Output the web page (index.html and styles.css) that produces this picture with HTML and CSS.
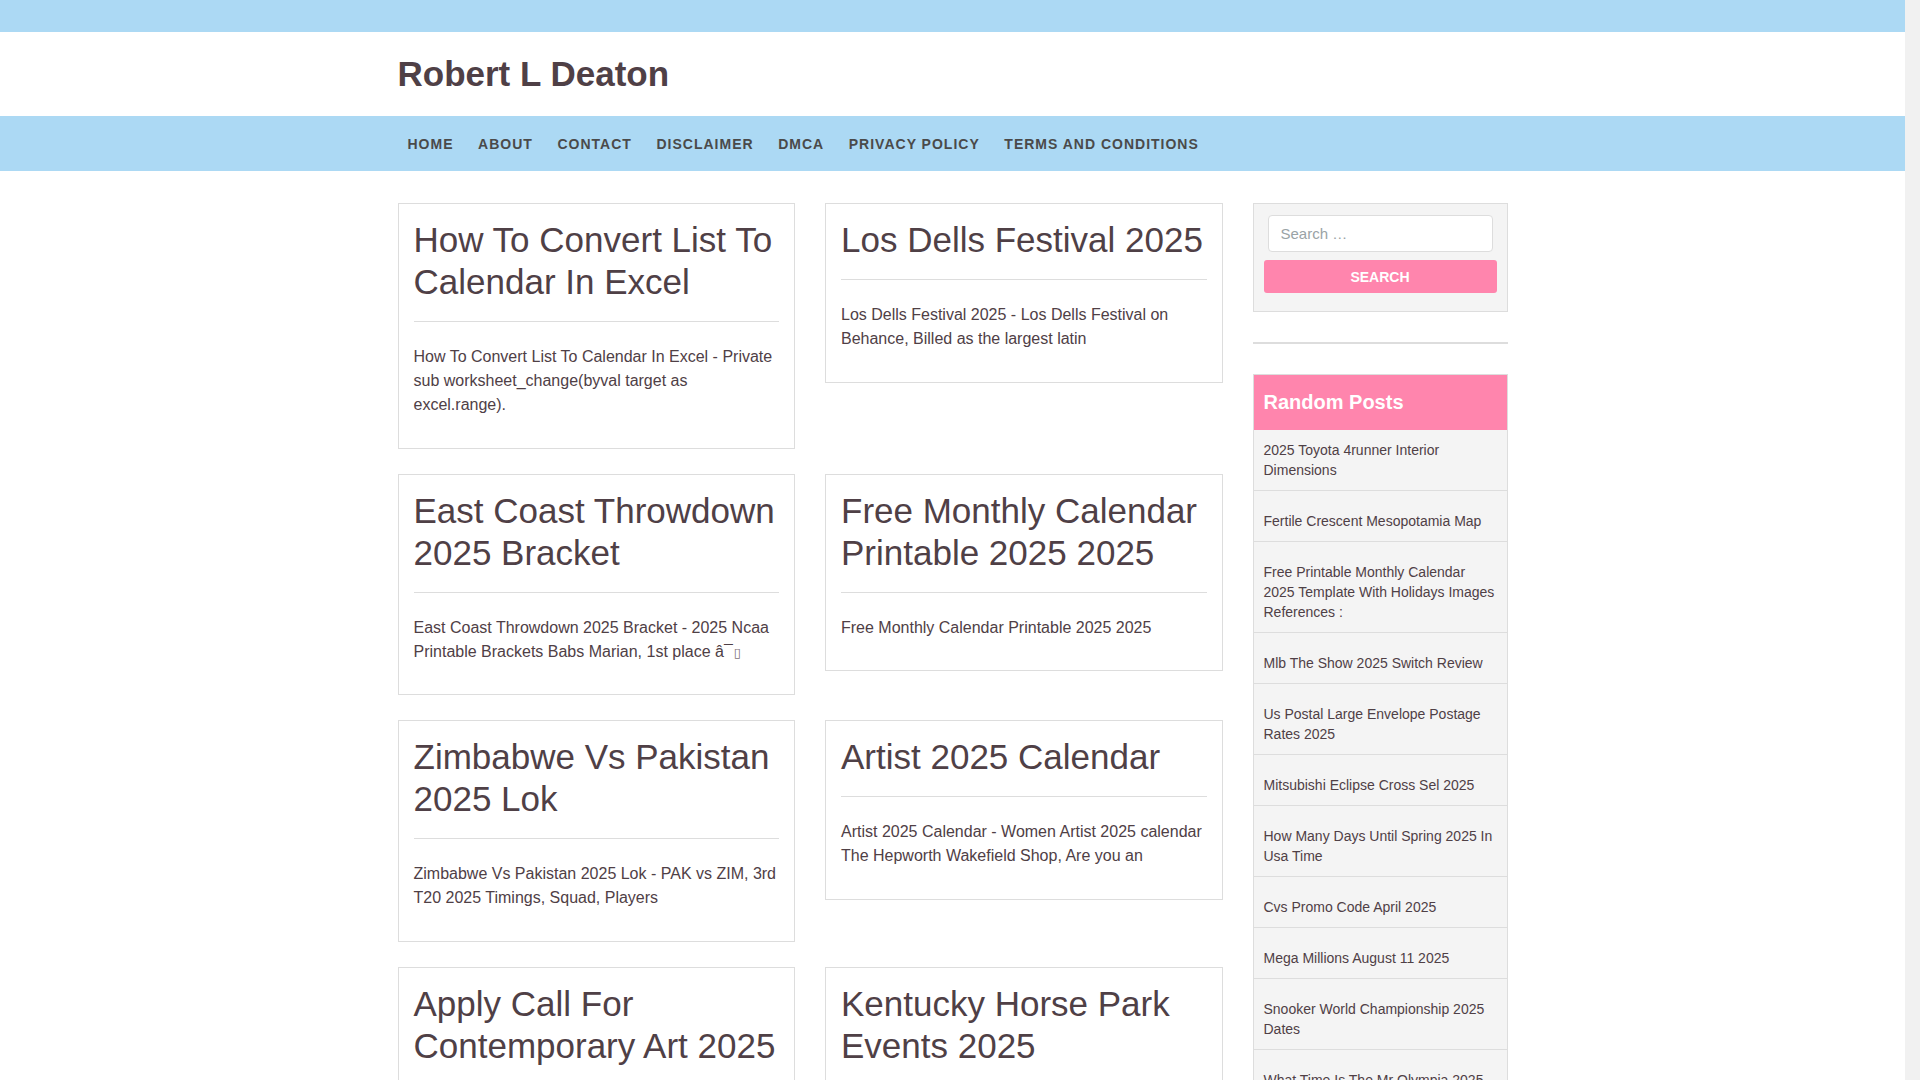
FILE: index.html
```html
<!DOCTYPE html>
<html>

<head>
  <title>Robert L Deaton</title>
  <meta charset="UTF-8">
  <meta name="viewport" content="width=device-width,initial-scale=1.0">
  <link rel="stylesheet" href="styles.css">
</head>

<body>
  <div class="top_bar"></div>

  <div class="site_header">
    <div class="container">
      <h1 class="site_title"><a href="">Robert L Deaton</a></h1>
    </div>
  </div>

  <div class="site_nav">
    <div class="container nav_list">
      <a href="">Home</a>
      <a href="">About</a>
      <a href="">Contact</a>
      <a href="">Disclaimer</a>
      <a href="">DMCA</a>
      <a href="">Privacy Policy</a>
      <a href="">Terms and Conditions</a>
    </div>
  </div>

  <div class="container page_main">

    <div class="posts">

      <div class="post">
        <h2><a href="">How To Convert List To Calendar In Excel</a></h2>
        <p>How To Convert List To Calendar In Excel - Private sub worksheet_change(byval target as excel.range).</p>
      </div>

      <div class="post">
        <h2><a href="">Los Dells Festival 2025</a></h2>
        <p>Los Dells Festival 2025 - Los Dells Festival on Behance, Billed as the largest latin</p>
      </div>

      <div class="post">
        <h2><a href="">East Coast Throwdown 2025 Bracket</a></h2>
        <p>East Coast Throwdown 2025 Bracket - 2025 Ncaa Printable Brackets Babs Marian, 1st place â¯<span class="tofu">▯</span></p>
      </div>

      <div class="post">
        <h2><a href="">Free Monthly Calendar Printable 2025 2025</a></h2>
        <p>Free Monthly Calendar Printable 2025 2025</p>
      </div>

      <div class="post">
        <h2><a href="">Zimbabwe Vs Pakistan 2025 Lok</a></h2>
        <p>Zimbabwe Vs Pakistan 2025 Lok - PAK vs ZIM, 3rd T20 2025 Timings, Squad, Players</p>
      </div>

      <div class="post">
        <h2><a href="">Artist 2025 Calendar</a></h2>
        <p>Artist 2025 Calendar - Women Artist 2025 calendar The Hepworth Wakefield Shop, Are you an</p>
      </div>

      <div class="post">
        <h2><a href="">Apply Call For Contemporary Art 2025</a></h2>
        <p>Apply Call For Contemporary Art 2025 - Open call for artists, submissions are now open</p>
      </div>

      <div class="post">
        <h2><a href="">Kentucky Horse Park Events 2025</a></h2>
        <p>Kentucky Horse Park Events 2025 - Calendar of events at the Kentucky Horse Park</p>
      </div>

    </div>

    <div class="sidebar">

      <div class="widget widget_search">
        <form>
          <input type="search" placeholder="Search …">
          <button type="button">Search</button>
        </form>
      </div>

      <div class="widget_line"></div>

      <div class="widget widget_posts">
        <h3>Random Posts</h3>
        <ul>
          <li><a href="">2025 Toyota 4runner Interior Dimensions</a></li>
          <li><a href="">Fertile Crescent Mesopotamia Map</a></li>
          <li><a href="">Free Printable Monthly Calendar 2025 Template With Holidays Images References :</a></li>
          <li><a href="">Mlb The Show 2025 Switch Review</a></li>
          <li><a href="">Us Postal Large Envelope Postage Rates 2025</a></li>
          <li><a href="">Mitsubishi Eclipse Cross Sel 2025</a></li>
          <li><a href="">How Many Days Until Spring 2025 In Usa Time</a></li>
          <li><a href="">Cvs Promo Code April 2025</a></li>
          <li><a href="">Mega Millions August 11 2025</a></li>
          <li><a href="">Snooker World Championship 2025 Dates</a></li>
          <li><a href="">What Time Is The Mr Olympia 2025 Start</a></li>
          <li><a href="">Best Time To Visit Japan 2025</a></li>
        </ul>
      </div>

    </div>

  </div>

  <div class="site_footer">
    <div class="container">Copyright © 2025 Robert L Deaton</div>
  </div>

  <div class="scroll_track"></div>
</body>

</html>
```

FILE: styles.css
```css
html,
body {
  margin: 0;
  padding: 0;
  background-color: white;
  font-family: "Liberation Sans", Arial, sans-serif;
  color: #4f4046;
}

body {
  margin-right: 15px;
}

a {
  color: inherit;
  text-decoration: none;
}

.container {
  width: 1110px;
  margin: 0 auto;
}

.top_bar {
  height: 32px;
  background-color: #acd9f4;
}

.site_header .container {
  height: 84px;
  display: flex;
  align-items: center;
}

.site_title {
  margin: 0;
  font-size: 35px;
  font-weight: bold;
  line-height: 1.2;
}

.site_nav {
  background-color: #acd9f4;
}

.nav_list {
  height: 55px;
  display: flex;
  align-items: center;
  gap: 4.6px;
}

.nav_list a {
  padding: 0 10px;
  font-size: 14px;
  font-weight: bold;
  letter-spacing: 1px;
  text-transform: uppercase;
  color: #4a4a4a;
}

.page_main {
  display: flex;
  gap: 30px;
  align-items: flex-start;
  padding-top: 32px;
}

.posts {
  width: 825px;
  display: grid;
  grid-template-columns: repeat(2, 1fr);
  column-gap: 30px;
  row-gap: 25px;
  align-items: start;
}

.post {
  border: 1px solid #dddddd;
  padding: 15px;
}

.post h2 {
  margin: 0;
  padding-bottom: 18px;
  border-bottom: 1px solid #dddddd;
  font-size: 35px;
  font-weight: normal;
  line-height: 42px;
}

.post p {
  margin: 23px 0 15.5px;
  font-size: 16px;
  line-height: 24px;
}

.tofu {
  display: inline-block;
  margin-left: 1px;
  line-height: 0;
  font-family: "DejaVu Sans", sans-serif;
  font-size: 13px;
  color: #7d6f74;
}

.sidebar {
  width: 255px;
}

.widget {
  border: 1px solid #dddddd;
  background-color: #f4f4f4;
}

.widget_search {
  padding: 11px 10px 18px;
}

.widget_search input {
  display: block;
  box-sizing: border-box;
  width: calc(100% - 8px);
  height: 37px;
  margin: 0 4px;
  padding: 0 12px;
  border: 1px solid #dddddd;
  border-radius: 4px;
  background-color: white;
  font-family: inherit;
  font-size: 15px;
  color: #4f4046;
}

.widget_search input::placeholder {
  color: #9aa3a6;
}

.widget_search button {
  display: block;
  width: 100%;
  height: 33px;
  margin-top: 8px;
  border: none;
  border-radius: 3px;
  background-color: #ff85ad;
  color: white;
  font-family: inherit;
  font-size: 14px;
  font-weight: bold;
  text-transform: uppercase;
}

.widget_line {
  height: 2px;
  margin: 30px 0;
  background-color: #dddddd;
}

.widget_posts h3 {
  margin: 0;
  padding: 14px 10px;
  background-color: #ff85ad;
  color: white;
  font-size: 20px;
  font-weight: bold;
  line-height: 27px;
}

.widget_posts ul {
  margin: 0;
  padding: 0;
  list-style: none;
}

.widget_posts li {
  padding: 10px 10px;
  border-bottom: 1px solid #dddddd;
  font-size: 14px;
  line-height: 20px;
}

.widget_posts li+li {
  padding-top: 20px;
}

.site_footer {
  margin-top: 40px;
  padding: 20px 0;
  background-color: #acd9f4;
  font-size: 14px;
  color: #4a4a4a;
}

/* stands in for the browser's scrollbar gutter */
.scroll_track {
  position: fixed;
  top: 0;
  right: 0;
  width: 15px;
  height: 100%;
  background-color: #f1f1f1;
}
```
